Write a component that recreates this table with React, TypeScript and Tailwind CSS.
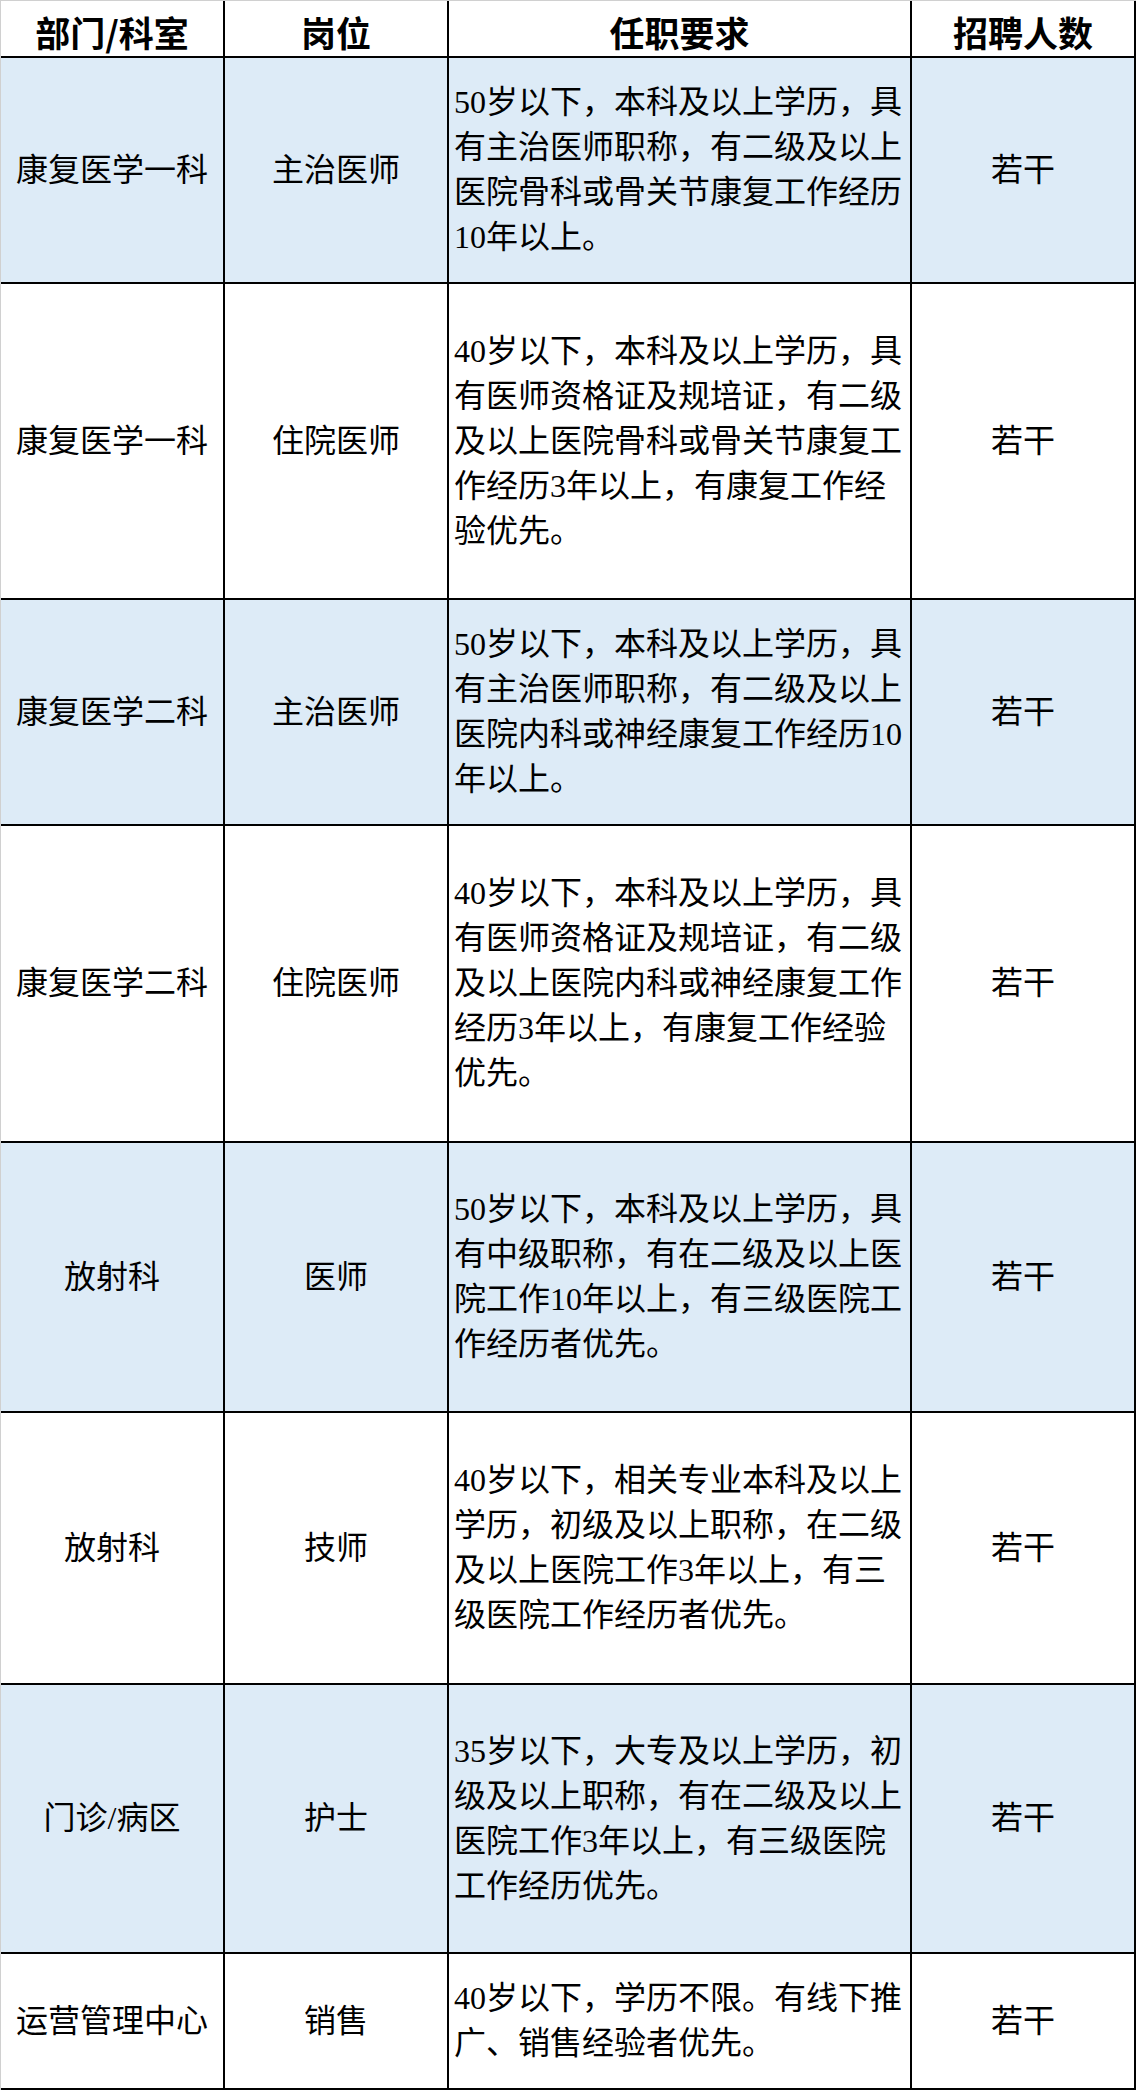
type Job = {
  dept: string;
  post: string;
  req: string[];
  h: string;
  blue: boolean;
};

const JOBS: Job[] = [
  {
    dept: "康复医学一科",
    post: "主治医师",
    req: ["50岁以下，本科及以上学历，具", "有主治医师职称，有二级及以上", "医院骨科或骨关节康复工作经历", "10年以上。"],
    h: "h-[226px]",
    blue: true,
  },
  {
    dept: "康复医学一科",
    post: "住院医师",
    req: ["40岁以下，本科及以上学历，具", "有医师资格证及规培证，有二级", "及以上医院骨科或骨关节康复工", "作经历3年以上，有康复工作经", "验优先。"],
    h: "h-[316px]",
    blue: false,
  },
  {
    dept: "康复医学二科",
    post: "主治医师",
    req: ["50岁以下，本科及以上学历，具", "有主治医师职称，有二级及以上", "医院内科或神经康复工作经历10", "年以上。"],
    h: "h-[226px]",
    blue: true,
  },
  {
    dept: "康复医学二科",
    post: "住院医师",
    req: ["40岁以下，本科及以上学历，具", "有医师资格证及规培证，有二级", "及以上医院内科或神经康复工作", "经历3年以上，有康复工作经验", "优先。"],
    h: "h-[317px]",
    blue: false,
  },
  {
    dept: "放射科",
    post: "医师",
    req: ["50岁以下，本科及以上学历，具", "有中级职称，有在二级及以上医", "院工作10年以上，有三级医院工", "作经历者优先。"],
    h: "h-[270px]",
    blue: true,
  },
  {
    dept: "放射科",
    post: "技师",
    req: ["40岁以下，相关专业本科及以上", "学历，初级及以上职称，在二级", "及以上医院工作3年以上，有三", "级医院工作经历者优先。"],
    h: "h-[272px]",
    blue: false,
  },
  {
    dept: "门诊/病区",
    post: "护士",
    req: ["35岁以下，大专及以上学历，初", "级及以上职称，有在二级及以上", "医院工作3年以上，有三级医院", "工作经历优先。"],
    h: "h-[269px]",
    blue: true,
  },
  {
    dept: "运营管理中心",
    post: "销售",
    req: ["40岁以下，学历不限。有线下推", "广、销售经验者优先。"],
    h: "h-[136px]",
    blue: false,
  },
];

const HEAD = ["部门/科室", "岗位", "任职要求", "招聘人数"];

const body = "font-['Liberation_Serif','Noto_Sans_CJK_SC',serif] text-[32px] leading-[45px] text-black";

export default function App() {
  return (
    <div className="w-[1136px] bg-white border-l border-t border-[#d0d0d0]">
      <div className="grid grid-cols-[224px_224px_463px_224px]">
        {HEAD.map((t) => (
          <div
            key={t}
            className="flex h-[57px] items-center justify-center border-b-2 border-r-2 border-black pt-[6px] font-['Noto_Sans_CJK_SC',sans-serif] text-[35px] font-bold leading-none text-black"
          >
            {t}
          </div>
        ))}

        {JOBS.map((j, i) => {
          const bg = j.blue ? "bg-[#ddebf7]" : "bg-white";
          const cell = `flex items-center border-b-2 border-r-2 border-black ${j.h} ${bg} ${body}`;
          return [
            <div key={`d${i}`} className={`${cell} justify-center`}>
              {j.dept}
            </div>,
            <div key={`p${i}`} className={`${cell} justify-center`}>
              {j.post}
            </div>,
            <div key={`r${i}`} className={`${cell} pl-[5px]`}>
              <div className="whitespace-nowrap">
                {j.req.map((l) => (
                  <div key={l}>{l}</div>
                ))}
              </div>
            </div>,
            <div key={`n${i}`} className={`${cell} justify-center`}>
              若干
            </div>,
          ];
        })}
      </div>
    </div>
  );
}
